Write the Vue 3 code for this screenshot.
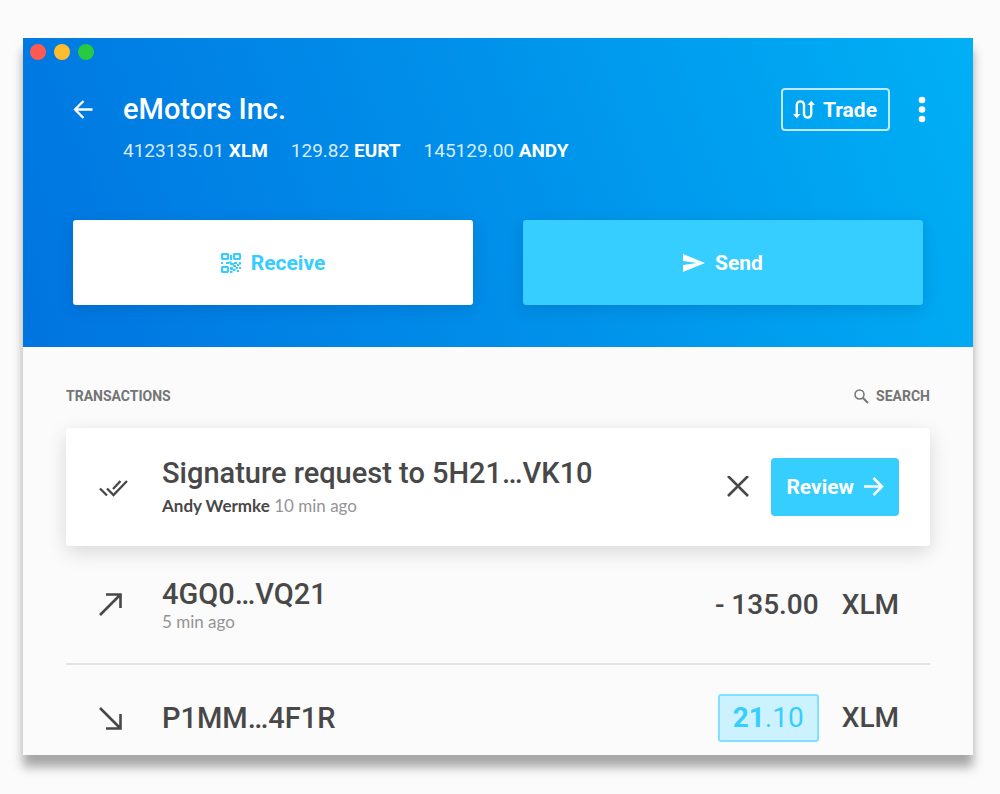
<script setup>
const balances = [
  { amount: '4123135.01', asset: 'XLM' },
  { amount: '129.82', asset: 'EURT' },
  { amount: '145129.00', asset: 'ANDY' },
]
</script>

<template>
  <div class="window">
    <header class="top">
      <div class="lights">
        <span class="light red"></span>
        <span class="light amber"></span>
        <span class="light green"></span>
      </div>

      <div class="title-row">
        <button class="plain back" type="button" aria-label="Back">
          <svg width="20" height="20" viewBox="0 0 20 20" fill="none" stroke="currentColor" stroke-width="2.300"><path d="M19.500 9.500H2M10.500 1L2 9.500L10.500 18" /></svg>
        </button>
        <h1>eMotors Inc.</h1>
        <button class="trade" type="button">
          <svg width="22" height="20" viewBox="0 0 22 20" fill="none" stroke="currentColor" stroke-width="2.400">
            <path d="M3.800 15V5a3.600 3.600 0 0 1 7.200 0v9a3.600 3.600 0 0 0 7.200 0V4" />
            <path d="M0 14h7.600L3.800 18.200zM14.400 5H22L18.200 .8z" fill="currentColor" stroke="none" />
          </svg>
          <span>Trade</span>
        </button>
        <button class="plain more" type="button" aria-label="More options">
          <svg width="8" height="28" viewBox="0 0 8 28" fill="currentColor"><circle cx="4" cy="4" r="3.300" /><circle cx="4" cy="13.500" r="3.300" /><circle cx="4" cy="23" r="3.300" /></svg>
        </button>
      </div>

      <div class="balances">
        <span v-for="b in balances" :key="b.asset">{{ b.amount }} <b>{{ b.asset }}</b></span>
      </div>

      <div class="actions">
        <button class="action receive" type="button">
          <svg width="20" height="20" viewBox="0 0 20 20" fill="currentColor">
            <path fill-rule="evenodd" d="M1 0h6l1 1v5l-1 1H1L0 6V1zM2.200 2v3h3.600V2zM13 0h6l1 1v5l-1 1h-6l-1-1V1zM14.200 2v3h3.600V2zM1 13h6l1 1v5l-1 1H1l-1-1v-5zM2.200 15v3h3.600v-3z" />
            <path d="M9 2h2v5H9zM0 9h2v2H0zM5 9h3v2H5zM7.500 8.500h3v2h-3zM9 10h4v2H9zM13 9h3v2h-3zM18 9h2v2.500h-2zM16 11h2v2h-2zM12 12h3v2h-3zM9 14h3v3H9zM14.500 14h2.500v2h-2.500zM18 14h2v2h-2zM12 16h2.500v2H12zM16 17h2v2h-2zM9 18h2.500v2H9z" />
          </svg>
          <span>Receive</span>
        </button>
        <button class="action send" type="button">
          <svg width="22" height="20" viewBox="0 0 22 20" fill="currentColor"><path d="M0 1L22 10L0 19V12L14 10L0 8z" /></svg>
          <span>Send</span>
        </button>
      </div>
    </header>

    <main>
      <div class="bar">
        <h2>TRANSACTIONS</h2>
        <button class="plain search" type="button">
          <svg width="15" height="15" viewBox="0 0 15 15" fill="none" stroke="currentColor"><circle cx="5.500" cy="5.500" r="4.500" stroke-width="1.500" /><path d="M9 9l5 5" stroke-width="2" /></svg>
          <span>SEARCH</span>
        </button>
      </div>

      <section class="row card">
        <svg width="29" height="22" viewBox="0 0 29 22" fill="none" stroke="currentColor" stroke-width="2.300"><path d="M1 12.500l7 7M8 12.500l6.500 6.500L28 5M14 13L21.500 5" /></svg>
        <div class="info">
          <h3>Signature request to 5H21…VK10</h3>
          <p><strong>Andy Wermke</strong> 10 min ago</p>
        </div>
        <button class="plain dismiss" type="button" aria-label="Dismiss">
          <svg width="22" height="22" viewBox="0 0 22 22" fill="none" stroke="currentColor" stroke-width="2.600"><path d="M1 0l20 20M21 0L1 20" /></svg>
        </button>
        <button class="review" type="button">
          <span>Review</span>
          <svg width="20" height="20" viewBox="0 0 20 20" fill="none" stroke="currentColor" stroke-width="2.500"><path d="M0 9.500h18M9.500 1L18 9.500L9.500 18" /></svg>
        </button>
      </section>

      <section class="row sent">
        <svg width="23" height="23" viewBox="0 0 23 23" fill="none" stroke="currentColor" stroke-width="2.600"><path d="M1 22L21 2M7 1.500h14.500V15" /></svg>
        <div class="info">
          <h3>4GQ0…VQ21</h3>
          <p>5 min ago</p>
        </div>
        <span class="amount">- 135.00</span>
        <span class="asset">XLM</span>
      </section>

      <section class="row received">
        <svg width="23" height="23" viewBox="0 0 23 23" fill="none" stroke="currentColor" stroke-width="2.600"><path d="M1 1L21 21M7 21.500h14.500V7" /></svg>
        <div class="info"><h3>P1MM…4F1R</h3></div>
        <span class="credit"><b>21</b>.10</span>
        <span class="asset">XLM</span>
      </section>
    </main>
  </div>
</template>

<style>
body {
  background: #fbfbfb;
}
</style>

<style scoped>
.window {
  margin: 38px 27px 39px 23px;
  font-family: Roboto, "Liberation Sans", sans-serif;
  color: #484848;
  background: #fbfbfb;
  box-shadow: 0 12px 10px rgba(0, 0, 0, 0.34);
}
h1, h2, h3, p {
  margin: 0;
}
button {
  font: inherit;
  border: 0;
  padding: 0;
  display: flex;
  align-items: center;
  justify-content: center;
  cursor: pointer;
}
svg {
  display: block;
  flex: none;
}
.plain {
  background: none;
  color: inherit;
}
.top {
  color: #fff;
  background: linear-gradient(70deg, #0074e0 0%, #0090ea 50%, #00b0f5 100%);
  padding-bottom: 42px;
}
.lights {
  display: flex;
  gap: 8px;
  padding: 6px 7px;
}
.light {
  width: 16px;
  height: 16px;
  border-radius: 50%;
}
.red { background: #ff5a52; }
.amber { background: #ffbc2e; }
.green { background: #28ca42; }
.title-row {
  display: flex;
  align-items: center;
  padding: 0 47px 0 50px;
  margin-top: 22px;
}
h1 {
  flex: 1;
  margin-left: 30px;
  padding-bottom: 2px;
  font-size: 29px;
  line-height: 32px;
  font-weight: 500;
}
.trade {
  box-sizing: border-box;
  height: 43px;
  padding: 0 11px 0 10px;
  gap: 8px;
  border: 2px solid rgba(255, 255, 255, 0.75);
  border-radius: 4px;
  background: none;
  color: #fff;
  font-size: 21px;
  font-weight: 700;
}
.more {
  margin-left: 28px;
}
.balances {
  display: flex;
  gap: 23px;
  padding: 0 100px;
  margin-top: 8px;
  font-size: 19px;
  line-height: 24px;
}
.balances span {
  color: rgba(255, 255, 255, 0.85);
}
.balances b {
  color: #fff;
}
.actions {
  display: grid;
  grid-template-columns: 1fr 1fr;
  gap: 50px;
  padding: 0 50px;
  margin-top: 57px;
}
.action {
  height: 85px;
  border-radius: 3px;
  font-size: 21px;
  font-weight: 700;
  gap: 10px;
  box-shadow: 0 4px 16px rgba(0, 60, 120, 0.2);
}
.receive {
  background: #fff;
  color: #36cdff;
}
.send {
  background: #36cdff;
  color: #fff;
}
main {
  padding: 0 43px;
}
.bar {
  display: flex;
  justify-content: space-between;
  align-items: center;
  padding: 41px 0 23px;
  font-size: 14px;
  line-height: 17px;
  color: #747474;
}
h2 {
  font-size: 14px;
  font-weight: 700;
}
.search {
  gap: 7px;
  font-weight: 700;
}
.row {
  box-sizing: border-box;
  display: grid;
  grid-template-columns: 63px 1fr auto auto;
  align-items: center;
  padding: 0 31px 0 33px;
}
.card {
  height: 118px;
  background: #fff;
  border-radius: 3px;
  box-shadow: 0 6px 20px rgba(0, 0, 0, 0.14);
}
h3 {
  font-size: 29px;
  line-height: 32px;
  font-weight: 500;
}
p {
  font-family: Lato, sans-serif;
  font-size: 17px;
  line-height: 24px;
  margin-top: 5px;
  color: #949494;
}
p strong {
  color: #484848;
  font-weight: 700;
}
.dismiss {
  margin-right: 22px;
}
.review {
  height: 58px;
  padding: 0 15px;
  gap: 10px;
  border-radius: 4px;
  background: #36cdff;
  color: #fff;
  font-size: 21px;
  font-weight: 700;
}
.sent {
  height: 119px;
  border-bottom: 2px solid #e3e3e3;
}
.sent .info {
  padding-top: 2px;
}
.sent p {
  margin-top: 0;
}
.amount, .asset, .credit {
  font-size: 28px;
  line-height: 32px;
  font-weight: 500;
}
.asset {
  margin-left: 23px;
}
.received {
  padding-top: 29px;
  padding-bottom: 13px;
}
.credit {
  padding: 6px 13px;
  border: 2px solid #7fe0ff;
  border-radius: 3px;
  background: #cdf2ff;
  color: #36cdff;
  font-weight: 400;
}
.credit b {
  font-weight: 700;
}
</style>
